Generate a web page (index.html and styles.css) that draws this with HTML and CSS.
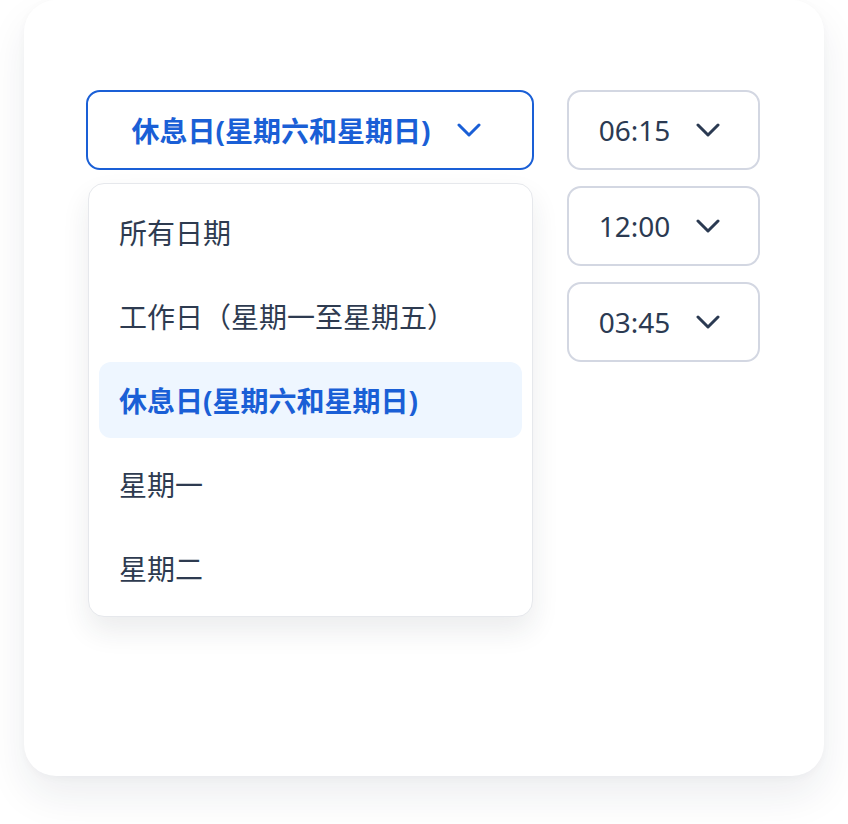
FILE: index.html
```html
<!DOCTYPE html>
<html lang="zh-CN">
<head>
<meta charset="utf-8">
<link rel="stylesheet" href="styles.css">
</head>
<body>
<div class="card">
  <div class="row">
    <div class="select-wrap">
      <button class="select active">
        <span class="label">休息日(星期六和星期日)</span>
        <svg class="chev" viewBox="0 0 24 14" width="24" height="14"><path d="M2 2 L12 12 L22 2" fill="none" stroke="currentColor" stroke-width="3" stroke-linecap="round" stroke-linejoin="round"/></svg>
      </button>
      <ul class="menu">
        <li class="item">所有日期</li>
        <li class="item">工作日（星期一至星期五）</li>
        <li class="item selected">休息日(星期六和星期日)</li>
        <li class="item">星期一</li>
        <li class="item">星期二</li>
      </ul>
    </div>
    <div class="times">
      <button class="select time">
        <span class="label">06:15</span>
        <svg class="chev" viewBox="0 0 24 14" width="24" height="14"><path d="M2 2 L12 12 L22 2" fill="none" stroke="currentColor" stroke-width="3" stroke-linecap="round" stroke-linejoin="round"/></svg>
      </button>
      <button class="select time">
        <span class="label">12:00</span>
        <svg class="chev" viewBox="0 0 24 14" width="24" height="14"><path d="M2 2 L12 12 L22 2" fill="none" stroke="currentColor" stroke-width="3" stroke-linecap="round" stroke-linejoin="round"/></svg>
      </button>
      <button class="select time">
        <span class="label">03:45</span>
        <svg class="chev" viewBox="0 0 24 14" width="24" height="14"><path d="M2 2 L12 12 L22 2" fill="none" stroke="currentColor" stroke-width="3" stroke-linecap="round" stroke-linejoin="round"/></svg>
      </button>
    </div>
  </div>
</div>
</body>
</html>
```

FILE: styles.css
```css
* { box-sizing: border-box; }
html, body { margin: 0; padding: 0; background: #ffffff; }
body {
  font-family: "Noto Sans", "Noto Sans CJK SC", sans-serif;
  padding: 0 24px 48px;
  width: 848px;
  height: 824px;
  overflow: hidden;
}
.card {
  background: #ffffff;
  border-radius: 32px;
  height: 776px;
  padding: 90px 64px 0 62px;
  box-shadow: 0 20px 40px rgba(30, 40, 60, 0.08), 0 2px 8px rgba(30, 40, 60, 0.03);
}
.row {
  display: flex;
  align-items: flex-start;
  gap: 33px;
}
.select-wrap {
  position: relative;
  width: 448px;
}
.select {
  display: flex;
  align-items: center;
  justify-content: center;
  gap: 28px;
  height: 80px;
  width: 100%;
  background: #ffffff;
  border-radius: 14px;
  font-family: inherit;
  cursor: pointer;
  padding: 0;
}
.select.active {
  border: 2px solid #1a5fd6;
  color: #1a5fd6;
  font-size: 28px;
  font-weight: 700;
  gap: 26px;
  padding-right: 8px;
}
.times {
  display: flex;
  flex-direction: column;
  gap: 16px;
  width: 193px;
}
.select.time {
  border: 2px solid #d3d7e2;
  color: #2b3a52;
  font-size: 28px;
  font-weight: 400;
  gap: 26px;
  padding-right: 8px;
}
.chev { display: block; flex: none; }
.menu {
  position: absolute;
  top: 93px;
  left: 2px;
  right: 1px;
  margin: 0;
  list-style: none;
  background: #ffffff;
  border: 1px solid #e6e8ec;
  border-radius: 16px;
  padding: 10px;
  display: flex;
  flex-direction: column;
  gap: 8px;
  box-shadow: 0 14px 28px rgba(30, 40, 60, 0.09);
}
.item {
  height: 76px;
  display: flex;
  align-items: center;
  padding-left: 20px;
  border-radius: 12px;
  font-size: 28px;
  color: #2e3b50;
}
.item.selected {
  background: #eef6ff;
  color: #1a5fd6;
  font-weight: 700;
}
```
